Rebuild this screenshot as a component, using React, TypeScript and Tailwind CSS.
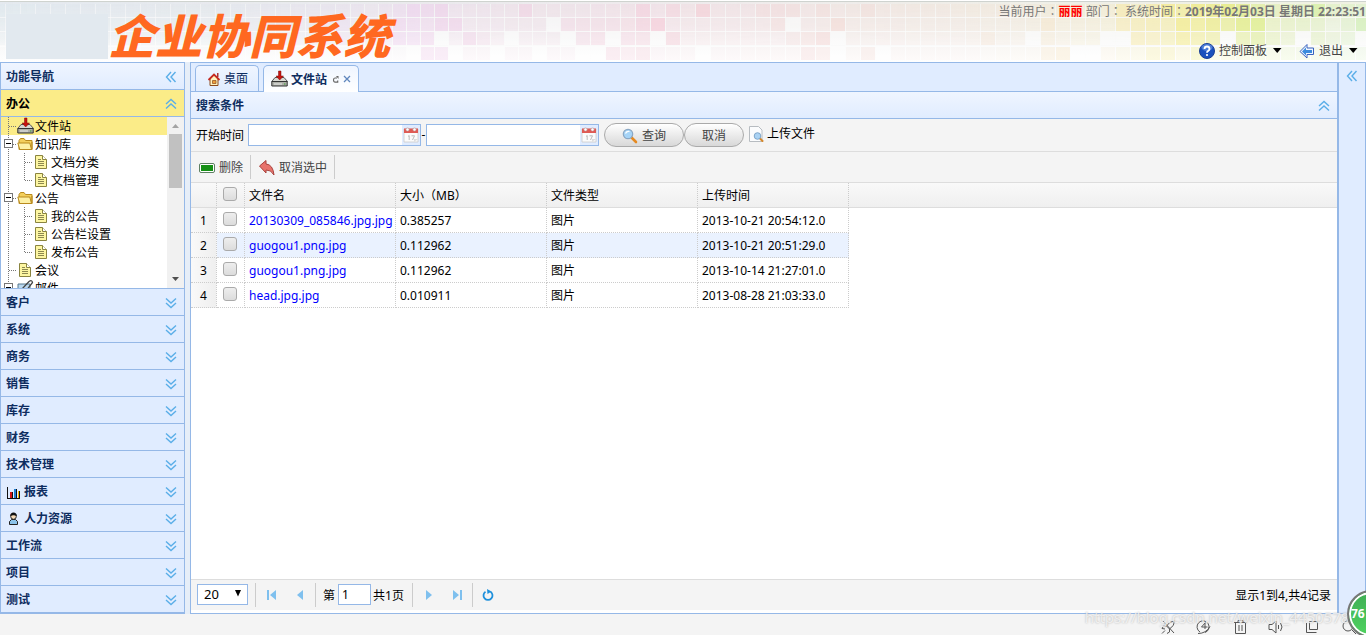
import type { ReactNode } from 'react';

const menus: { label: string; icon?: ReactNode }[] = [
  { label: '客户' },
  { label: '系统' },
  { label: '商务' },
  { label: '销售' },
  { label: '库存' },
  { label: '财务' },
  { label: '技术管理' },
  { label: '报表', icon: <ChartIcon /> },
  { label: '人力资源', icon: <UserIcon /> },
  { label: '工作流' },
  { label: '项目' },
  { label: '测试' },
];

type Guide = 'line' | 'tee' | 'end' | 'open';

const tree: { label: string; guides: Guide[]; icon: 'drive' | 'folder' | 'file' | 'mail'; active?: boolean }[] = [
  { label: '文件站', guides: ['tee'], icon: 'drive', active: true },
  { label: '知识库', guides: ['open'], icon: 'folder' },
  { label: '文档分类', guides: ['line', 'tee'], icon: 'file' },
  { label: '文档管理', guides: ['line', 'end'], icon: 'file' },
  { label: '公告', guides: ['open'], icon: 'folder' },
  { label: '我的公告', guides: ['line', 'tee'], icon: 'file' },
  { label: '公告栏设置', guides: ['line', 'tee'], icon: 'file' },
  { label: '发布公告', guides: ['line', 'end'], icon: 'file' },
  { label: '会议', guides: ['tee'], icon: 'file' },
  { label: '邮件', guides: ['open'], icon: 'mail' },
];

const files = [
  { name: '20130309_085846.jpg.jpg', size: '0.385257', type: '图片', time: '2013-10-21 20:54:12.0' },
  { name: 'guogou1.png.jpg', size: '0.112962', type: '图片', time: '2013-10-21 20:51:29.0' },
  { name: 'guogou1.png.jpg', size: '0.112962', type: '图片', time: '2013-10-14 21:27:01.0' },
  { name: 'head.jpg.jpg', size: '0.010911', type: '图片', time: '2013-08-28 21:03:33.0' },
];

// banner mosaic: colour stops along x, then tiles that differ from the default strength
const hues: [number, number[]][] = [
  [0, [214, 230, 236]],
  [200, [218, 226, 234]],
  [300, [226, 214, 236]],
  [400, [240, 196, 238]],
  [480, [240, 200, 224]],
  [650, [246, 196, 212]],
  [820, [244, 206, 202]],
  [1000, [246, 220, 196]],
  [1100, [250, 228, 160]],
  [1180, [244, 232, 96]],
  [1250, [216, 236, 110]],
  [1366, [196, 238, 170]],
];

const special: Record<string, number> = {
  '322-0': 6, '335-1': 5, '335-2': 5, '392-1': 6, '392-2': 7, '364-0': 2, '392-0': 4,
  '406-0': 6, '420-0': 6, '434-0': 7, '518-0': 7, '635-0': 7, '665-0': 6, '695-0': 8, '755-0': 5, '770-0': 5, '785-0': 5, '815-0': 5, '860-0': 5,
  '406-1': 5, '420-1': 5, '434-1': 7, '448-1': 7, '546-1': 0, '560-1': 5, '575-1': 5, '590-1': 5, '605-1': 5, '620-1': 5, '635-1': 7, '650-1': 9, '770-1': 5, '785-1': 0, '830-1': 7,
  '406-2': 6, '420-2': 7, '434-2': 0, '462-2': 8, '476-2': 5, '504-2': 0, '560-2': 0, '575-2': 6, '590-2': 6, '605-2': 0, '620-2': 6, '635-2': 6, '650-2': 0, '665-2': 8, '785-2': 5, '800-2': 6, '815-2': 8, '830-2': 0,
  '406-3': 0, '420-3': 9, '434-3': 9, '448-3': 0, '490-3': 0, '532-3': 0, '575-3': 0, '590-3': 0, '605-3': 9, '620-3': 7, '635-3': 9, '695-3': 0, '800-3': 9, '815-3': 7, '830-3': 0, '860-3': 8, '875-3': 0,
  '980-2': 6, '1025-2': 0, '1040-1': 6, '1040-2': 5, '1040-3': 8, '1055-3': 9, '1070-3': 0, '1085-3': 0, '1100-2': 0, '1115-2': 0, '1130-2': 7, '1145-2': 6,
  '1115-1': 6, '1130-1': 6, '1145-1': 6, '1160-1': 5, '1175-1': 8, '1190-1': 7, '1205-1': 8, '1220-1': 7, '1235-1': 9, '1250-1': 9,
  '1115-0': 7, '1130-0': 4, '1145-0': 6, '1160-0': 8, '1175-0': 6, '1190-0': 8, '1205-0': 8, '1220-0': 9, '1235-0': 8, '1250-0': 6, '1310-0': 8,
  '1160-2': 6, '1175-2': 8, '1190-2': 7, '1205-2': 7, '1220-2': 0, '1235-2': 7, '1250-2': 8, '1265-2': 5, '1295-2': 0, '1310-2': 5, '1355-2': 0,
  '1145-3': 7, '1160-3': 7, '1190-3': 8, '1355-1': 8, '1325-1': 2,
};

function tileColor(x: number) {
  let i = 0;
  while (i < hues.length - 2 && hues[i + 1][0] < x) i++;
  const [x0, a] = hues[i];
  const [x1, b] = hues[i + 1];
  const t = Math.min(1, Math.max(0, (x - x0) / (x1 - x0)));
  return `rgb(${a.map((v, k) => Math.round(v + (b[k] - v) * t)).join(',')})`;
}

function Mosaic() {
  const columns: number[] = [];
  for (let x = -10; x < 2600; x += x >= 350 && x < 560 ? 14 : 15) columns.push(x);
  const fade = [0.65, 0.6, 0.45, 0.28];
  const tops = [3, 17, 31, 46];
  return (
    <svg className="absolute inset-0 h-full w-full" aria-hidden="true">
      {columns.map((x, i) =>
        tops.map((y, row) => {
          const width = (columns[i + 1] ?? x + 15) - x - 1;
          const strength = special[`${x}-${row}`] ?? (x < 400 && row === 3 ? 1 : x > 1100 ? 4 : 3);
          return strength === 0 ? (
            <rect key={y} x={x + 1} y={y} width={width} height="13" fill="#fff" opacity="0.4" />
          ) : (
            <rect key={y} x={x + 1} y={y} width={width} height="13" fill={tileColor(x)} opacity={(strength / 9) * fade[row]} />
          );
        }),
      )}
      {columns.map((x) => (
        <path key={x} d={`M${x + 0.5} 3V60`} stroke="#fff" opacity="0.35" />
      ))}
      <path d="M0 16.5H2600M0 30.5H2600M0 45.5H2600" stroke="#fff" opacity="0.45" />
    </svg>
  );
}

function Chevrons({ dir }: { dir: 'up' | 'down' | 'left' }) {
  const turn = dir === 'up' ? 'rotate(180 8 8)' : dir === 'left' ? 'rotate(90 8 8)' : undefined;
  return (
    <svg width="16" height="16" viewBox="0 0 16 16" fill="none" stroke="#5aaee8" strokeWidth="1.4" aria-hidden="true">
      <path transform={turn} d="M3 3.5 8 8l5-4.5M3 8l5 4.5L13 8" />
    </svg>
  );
}

function DriveIcon() {
  return (
    <svg width="18" height="18" viewBox="0 0 18 18" aria-hidden="true">
      <path d="M4 7.5h9l3.500 4H.8z" fill="#d8d8d2" stroke="#555" />
      <path d="M.8 11.500h15.400v4.500H.8z" fill="#aeb0a9" stroke="#333" />
      <path d="M3 14h8" stroke="#e9e9e9" />
      <path d="M13 14h1.500" stroke="#3b9c34" />
      <path d="M7.500 1h2.500v5h2.500L8.700 10 5 6h2.500z" fill="#c8130f" stroke="#7a0d0a" strokeWidth=".5" />
    </svg>
  );
}

function FolderIcon() {
  return (
    <svg width="18" height="18" viewBox="0 0 18 18" aria-hidden="true">
      <path d="M2 14.500V5.500L3.500 3.500H7L8.500 5.500H15v9z" fill="#f3cf5c" stroke="#b98a1e" />
      <path d="M.8 8h12l1.700 6.500H2.800z" fill="#fdf0a4" stroke="#b98a1e" />
      <path d="M15 7v7.500" stroke="#b98a1e" />
    </svg>
  );
}

function FileIcon() {
  return (
    <svg width="18" height="18" viewBox="0 0 18 18" aria-hidden="true">
      <path d="M2.500 2.500h7l4 4v9h-11z" fill="#fdf6a2" stroke="#8a8440" />
      <path d="M9.500 2.500v4h4" fill="#fff" stroke="#8a8440" />
      <path d="M5 6.500h3M5 8.500h6M5 10.500h6M5 12.500h6" stroke="#8c8850" />
    </svg>
  );
}

function MailIcon() {
  return (
    <svg width="18" height="18" viewBox="0 0 18 18" aria-hidden="true">
      <path d="M1 5h12v11H1z" fill="#b9d7ee" stroke="#56788f" />
      <path d="M5 10 12 2.500q3-2 3.500 1L9 12" fill="none" stroke="#444" strokeWidth="1.300" />
    </svg>
  );
}

function ChartIcon() {
  return (
    <svg width="16" height="16" viewBox="0 0 16 16" shapeRendering="crispEdges" aria-hidden="true">
      <path d="M4 8h2v6H4z" fill="#d21414" />
      <path d="M8 5h2v9H8z" fill="#1d7fd6" />
      <path d="M12 7h2v7h-2z" fill="#f5b800" />
      <path d="M1.500 3v11.500H14M6.500 8v6M10.500 5v9M13.500 7v8" stroke="#111" fill="none" />
    </svg>
  );
}

function UserIcon() {
  return (
    <svg width="16" height="16" viewBox="0 0 16 16" aria-hidden="true">
      <path d="M3.500 13.500v-3l2-2h4l2 2v3z" fill="#8cc3ea" stroke="#222" />
      <circle cx="7.500" cy="5.500" r="2.800" fill="#f8dcb8" stroke="#222" />
      <path d="M4 5q.5-3.500 3.500-3.500T11 5q-3.500-1.500-7 0z" fill="#111" />
    </svg>
  );
}

function HouseIcon() {
  return (
    <svg width="16" height="16" viewBox="0 0 16 16" aria-hidden="true">
      <path d="M4 8v6.500h8V8L8 4z" fill="#fff3bf" stroke="#8b4a1c" />
      <path d="M6.500 9.500h3.500v3H6.500z" fill="#f0a03c" stroke="#8b4a1c" strokeWidth=".7" />
      <path d="M11 2h1.500v4H11z" fill="#a33" />
      <path d="M2.500 9 8 3.500 13.500 9" fill="none" stroke="#c52a20" strokeWidth="1.800" />
    </svg>
  );
}

function CalendarIcon() {
  return (
    <svg width="16" height="18" viewBox="0 0 16 18" aria-hidden="true">
      <path d="M1 3h14v13H1z" fill="#fbfbfb" stroke="#ccc" strokeWidth=".8" />
      <path d="M1 2.500h14V7H1z" fill="#df5a54" />
      <circle cx="4.500" cy="3.500" r="1.600" fill="#fff" stroke="#b99" strokeWidth=".6" />
      <circle cx="11.500" cy="3.500" r="1.600" fill="#fff" stroke="#b99" strokeWidth=".6" />
      <path d="M5 10.500 6.200 9.500V14M8.500 9.800h3L9.500 14" fill="none" stroke="#bbb" />
      <path d="M11 16v-3h4z" fill="#ddd" />
    </svg>
  );
}

function GlassIcon() {
  return (
    <svg width="16" height="16" viewBox="0 0 16 16" aria-hidden="true">
      <path d="m9.500 9.500 4.500 4.500" stroke="#e58a22" strokeWidth="2.600" strokeLinecap="round" />
      <circle cx="6" cy="6" r="4.700" fill="#a6d4f7" stroke="#8aa7c4" strokeWidth="1.200" />
      <path d="M3.500 5.500q1-2.500 4-2" fill="none" stroke="#fff" strokeWidth="1.200" />
    </svg>
  );
}

function PreviewIcon() {
  return (
    <svg width="16" height="16" viewBox="0 0 16 16" aria-hidden="true">
      <path d="M1.500.5h9L14 4v11.500H1.500z" fill="#fbfcfd" stroke="#b7bcc1" />
      <path d="M12 12.500 14.500 15" stroke="#d5882c" strokeWidth="2" strokeLinecap="round" />
      <circle cx="9.500" cy="10" r="3.300" fill="#a9d2f3" stroke="#7fa6c9" />
    </svg>
  );
}

function GuideCell({ kind }: { kind: Guide }) {
  return (
    <svg width="16" height="18" viewBox="0 0 16 18" className="shrink-0" shapeRendering="crispEdges" aria-hidden="true">
      <path d={kind === 'end' ? 'M7.500 0V9' : 'M7.500 0V18'} stroke="#777" strokeDasharray="1 1" />
      {kind !== 'line' && <path d="M8 9.500H16" stroke="#777" strokeDasharray="1 1" />}
      {kind === 'open' && (
        <>
          <path d="M3.500 4.500h8v8h-8z" fill="#fff" stroke="#777" />
          <path d="M5 8.500h5" stroke="#000" />
        </>
      )}
    </svg>
  );
}

const treeIcons = { drive: <DriveIcon />, folder: <FolderIcon />, file: <FileIcon />, mail: <MailIcon /> };

// the TC face centres the full-width colon
function Colon() {
  return <span className="font-['Noto_Sans_CJK_TC',sans-serif]">：</span>;
}

function Banner() {
  return (
    <header className="relative flex h-[62px] shrink-0 justify-between overflow-hidden border-t border-white bg-gradient-to-b from-[#ebecec] to-white">
      <div className="absolute inset-x-0 top-0 h-11 bg-gradient-to-r from-[#dce6f2]/50 via-[#f6e6ec]/30 to-[#f4f8d8]/50 [mask-image:linear-gradient(#000,transparent)]"></div>
      <Mosaic />
      <div className="relative flex flex-1 border-t border-[#cfd3cf]">
        <div className="ml-1.5 mt-3 h-[45px] w-[102px] bg-[#e2e9ef]"></div>
        <h1 className="mt-[9px] whitespace-nowrap text-[47px] font-black italic leading-[50px] text-[#ff6820]">企业协同系统</h1>
      </div>
      <div className="relative flex flex-col items-end border-t border-[#cfd3cf]">
        <p className="whitespace-pre text-[12px] leading-[18px] text-[#777]">
          当前用户<Colon /><b className="text-[#f00]">丽丽</b> 部门<Colon /> 系统时间<Colon /><b>2019年02月03日 星期日 22:23:51</b>
        </p>
        <div className="mt-5 flex gap-4 pr-[7px] text-[12px] leading-[20px] text-[#444]">
          <button type="button" className="flex items-center gap-1">
            <svg width="16" height="16" viewBox="0 0 16 16" aria-hidden="true">
              <circle cx="8" cy="8" r="7.500" fill="#1b50bd" stroke="#1b3f94" />
              <ellipse cx="8" cy="4.500" rx="5.500" ry="3.500" fill="#6f9cea" opacity=".6" />
              <path d="M5.500 6q0-2.500 2.500-2.500T10.500 6q0 1.200-1.300 1.900Q8 8.500 8 9.800" fill="none" stroke="#fff" strokeWidth="1.800" />
              <circle cx="8" cy="12" r="1.100" fill="#fff" />
            </svg>
            控制面板
            <Caret />
          </button>
          <button type="button" className="flex items-center gap-1">
            <svg width="16" height="16" viewBox="0 0 16 16" aria-hidden="true">
              <path d="M8 1.500V5h6.500v6.500H8V15L1 8.500z" fill="#eef5ff" stroke="#3a62c0" />
              <path d="M7 4.500V7h6v3H7v2.500L3 8.500z" fill="#3b8bdd" />
            </svg>
            退出
            <Caret />
          </button>
        </div>
      </div>
    </header>
  );
}

function Caret() {
  return (
    <svg width="12" height="6" viewBox="0 0 12 6" aria-hidden="true">
      <path d="M2 0h8.500L6.200 5z" fill="#000" />
    </svg>
  );
}

function Sidebar() {
  return (
    <aside className="flex w-[185px] shrink-0 flex-col border border-b-2 border-[#95b8e7] bg-[#e0ecff] text-[12px] text-[#0e2d5f]">
      <div className="flex h-[27px] shrink-0 items-center justify-between border-b border-[#95b8e7] bg-gradient-to-b from-[#eff5ff] to-[#e0ecff] px-[5px] pt-0.5 font-bold">
        功能导航
        <Chevrons dir="left" />
      </div>
      <button type="button" className="flex h-[27px] shrink-0 items-center justify-between border-b border-[#95b8e7] bg-[#fbec88] px-[5px] pt-px font-bold text-black">
        办公
        <Chevrons dir="up" />
      </button>
      <div className="flex min-h-0 flex-1 overflow-hidden bg-white text-black">
        <ul className="flex-1">
          {tree.map((node) => (
            <li key={node.label} className={node.active ? 'flex h-[18px] items-center bg-[#fbec88]' : 'flex h-[18px] items-center'}>
              {node.guides.map((kind, i) => (
                <GuideCell key={i} kind={kind} />
              ))}
              {treeIcons[node.icon]}
              <a href="#" className="whitespace-nowrap pt-0.5 leading-[18px]">{node.label}</a>
            </li>
          ))}
        </ul>
        <div className="flex w-[17px] flex-col items-center bg-[#f1f1f1]">
          <svg width="17" height="17" viewBox="0 0 17 17" aria-hidden="true">
            <path d="M5 11h7L8.500 7z" fill="#a3a3a3" />
          </svg>
          <div className="h-[54px] w-[13px] bg-[#c1c1c1]"></div>
          <svg className="mt-auto" width="17" height="17" viewBox="0 0 17 17" aria-hidden="true">
            <path d="M5 6h7l-3.500 4z" fill="#505050" />
          </svg>
        </div>
      </div>
      {menus.map((menu) => (
        <button key={menu.label} type="button" className="flex h-[27px] shrink-0 items-center gap-0.5 border-t border-[#95b8e7] px-[5px] pt-0.5 font-bold">
          {menu.icon}
          <span className="flex-1 text-left">{menu.label}</span>
          <Chevrons dir="down" />
        </button>
      ))}
    </aside>
  );
}

function DateBox({ label }: { label: string }) {
  return (
    <div className="flex h-[22px] w-[173px] border border-[#95b8e7] bg-white">
      <input type="text" aria-label={label} className="min-w-0 flex-1 px-1 outline-none" />
      <button type="button" aria-label="选择日期" className="flex w-[18px] items-center justify-center bg-[#e0ecff]">
        <CalendarIcon />
      </button>
    </div>
  );
}

const pill = 'flex h-6 items-center justify-center gap-1 rounded-full border border-[#aaa] bg-gradient-to-b from-white to-[#d8d8d8] pt-px text-[#444]';
const checkbox = 'block h-[14px] w-[14px] appearance-none rounded-[3px] border border-[#aaa] bg-gradient-to-b from-[#eee] to-[#dcdcdc]';

function FileTable() {
  const cell = 'border-b border-r border-dotted border-[#ccc] pl-1 pt-0.5';
  const tick = 'border-b border-r border-dotted border-[#ccc] pl-1.5 pt-1 align-top';
  const head = 'border-b border-r border-[#ddd] [border-right-style:dotted] [border-right-color:#ccc] pl-1 pt-0.5 text-left font-normal';
  return (
    <table className="w-full table-fixed border-separate border-spacing-0 text-[12px] leading-[22px] text-black">
      <colgroup>
        <col className="w-[26px]" />
        <col className="w-[28px]" />
        <col className="w-[151px]" />
        <col className="w-[151px]" />
        <col className="w-[151px]" />
        <col className="w-[151px]" />
        <col />
      </colgroup>
      <thead>
        <tr className="h-[25px] bg-gradient-to-b from-[#f9f9f9] to-[#efefef]">
          <td className={head}></td>
          <th className="border-b border-r border-[#ddd] pl-1.5 pt-1 align-top [border-right-color:#ccc] [border-right-style:dotted]">
            <input type="checkbox" aria-label="全选" className={checkbox} />
          </th>
          <th className={head}>文件名</th>
          <th className={head}>大小（MB）</th>
          <th className={head}>文件类型</th>
          <th className={head}>上传时间</th>
          <td className="border-b border-[#ddd]"></td>
        </tr>
      </thead>
      <tbody>
        {files.map((file, i) => (
          <tr key={i} className="h-[25px]">
            <td className="border-b border-r border-dotted border-[#ccc] bg-gradient-to-r from-[#f9f9f9] to-[#efefef] pt-0.5 text-center">{i + 1}</td>
            <td className={i === 1 ? tick + ' bg-[#eaf2ff]' : tick}>
              <input type="checkbox" aria-label={'选择 ' + file.name} className={checkbox} />
            </td>
            <td className={i === 1 ? cell + ' bg-[#eaf2ff]' : cell}>
              <a href="#" className="whitespace-nowrap text-[#00f]">{file.name}</a>
            </td>
            <td className={i === 1 ? cell + ' bg-[#eaf2ff]' : cell}>{file.size}</td>
            <td className={i === 1 ? cell + ' bg-[#eaf2ff]' : cell}>{file.type}</td>
            <td className={i === 1 ? cell + ' bg-[#eaf2ff]' : cell}>{file.time}</td>
            <td></td>
          </tr>
        ))}
      </tbody>
    </table>
  );
}

function Pager() {
  const step = 'flex h-6 w-7 items-center justify-center';
  const bar = 'h-6 w-px shrink-0 bg-[#ccc]';
  return (
    <div className="mb-[3px] flex h-[31px] shrink-0 items-center border-t border-[#ddd] bg-[#f4f4f4] px-1.5 text-[12px] text-black">
      <div className="relative mb-0.5">
        <select aria-label="每页条数" className="block h-[21px] w-[51px] appearance-none border border-[#95b8e7] bg-white pl-1.5 text-[13px] leading-[18px]">
          <option>20</option>
        </select>
        <svg className="pointer-events-none absolute right-1.5 top-1.5" width="8" height="7" viewBox="0 0 8 7" aria-hidden="true">
          <path d="M1 0h6L4 6.500z" fill="#000" />
        </svg>
      </div>
      <span className={bar + ' ml-[7px] mr-0.5'}></span>
      <button type="button" aria-label="首页" className={step}>
        <svg width="10" height="10" viewBox="0 0 10 10" fill="#7fc0ee"><path d="M0 0h2v10H0zM9 0v10L3 5z" /></svg>
      </button>
      <button type="button" aria-label="上一页" className={step}>
        <svg width="8" height="10" viewBox="0 0 8 10" fill="#7fc0ee"><path d="M7 0v10L1 5z" /></svg>
      </button>
      <span className={bar + ' ml-px mr-[7px]'}></span>
      <label htmlFor="page" className="mr-[3px] pt-0.5">第</label>
      <input id="page" type="text" defaultValue="1" className="mb-0.5 h-[21px] w-[33px] border border-[#95b8e7] bg-white px-[3px] outline-none" />
      <span className="ml-0.5 mr-2 pt-0.5">共1页</span>
      <span className={bar + ' mr-0.5'}></span>
      <button type="button" aria-label="下一页" className={step}>
        <svg width="8" height="10" viewBox="0 0 8 10" fill="#7fc0ee"><path d="M1 0v10l6-5z" /></svg>
      </button>
      <button type="button" aria-label="末页" className={step}>
        <svg width="10" height="10" viewBox="0 0 10 10" fill="#7fc0ee"><path d="M8 0h2v10H8zM1 0v10l6-5z" /></svg>
      </button>
      <span className={bar + ' ml-px mr-px'}></span>
      <button type="button" aria-label="刷新" className={step}>
        <svg width="12" height="12" viewBox="0 0 12 12" fill="none" aria-hidden="true">
          <path d="M3.500 2.700A4.500 4.500 0 1 0 8.500 2.700" stroke="#1e90dc" strokeWidth="1.800" />
          <path d="M5 0l4.500 2.500L5.500 5z" fill="#1e90dc" />
        </svg>
      </button>
      <span className="ml-auto pt-0.5">显示1到4,共4记录</span>
    </div>
  );
}

function Workspace() {
  return (
    <main className="ml-[5px] flex min-w-0 flex-1 flex-col border border-[#95b8e7] bg-white text-[12px] text-[#0e2d5f]">
      <nav className="flex h-[29px] shrink-0 items-end gap-1 border-b border-[#95b8e7] bg-[#e0ecff] pl-1">
        <button type="button" className="flex h-[26px] w-[64px] items-center justify-center gap-0.5 rounded-t-[5px] border border-b-0 border-[#95b8e7] bg-gradient-to-b from-[#eff5ff] to-[#e0ecff]">
          <HouseIcon />
          桌面
        </button>
        <button type="button" className="-mb-px flex h-[27px] w-[96px] items-center justify-center rounded-t-[5px] border border-b-0 border-[#95b8e7] bg-gradient-to-b from-[#eff5ff] to-white font-bold">
          <DriveIcon />
          <span className="ml-0.5 pt-px">文件站</span>
          <svg className="ml-1" width="20" height="10" viewBox="0 0 20 10" fill="none" aria-hidden="true">
            <path d="M6 4H4Q2.500 4 2.500 6T4 8.200h2.700V6.500" stroke="#666" strokeWidth="1.200" />
            <path d="M5 2h2.500v3z" fill="#666" />
            <path d="m13 2 6 6M19 2l-6 6" stroke="#5f86bd" strokeWidth="1.300" />
          </svg>
        </button>
      </nav>
      <div className="flex h-[27px] shrink-0 items-center justify-between border-b border-[#95b8e7] bg-gradient-to-b from-[#eff5ff] to-[#e0ecff] px-[5px] pt-px font-bold">
        搜索条件
        <Chevrons dir="up" />
      </div>
      <form className="flex h-[33px] shrink-0 items-center border-b border-[#ddd] bg-[#f4f4f4] pl-[5px] text-black">
        <span className="mr-1 pt-0.5">开始时间</span>
        <DateBox label="开始时间" />
        <span className="w-[5px] text-center">-</span>
        <DateBox label="结束时间" />
        <button type="button" className={pill + ' ml-[5px] w-20'}>
          <GlassIcon />
          查询
        </button>
        <button type="button" className={pill + ' w-[60px]'}>取消</button>
        <a href="#" className="mb-0.5 ml-1 flex items-center gap-[3px]">
          <PreviewIcon />
          上传文件
        </a>
      </form>
      <div className="flex h-[31px] shrink-0 items-center border-b border-[#ddd] bg-[#f4f4f4] pl-2 text-[#444]">
        <button type="button" className="flex items-center gap-1 pt-0.5">
          <svg width="16" height="16" viewBox="0 0 16 16" aria-hidden="true">
            <rect x=".5" y="3.500" width="15" height="9" rx="1.500" fill="#fff" stroke="#5d7f62" />
            <path d="M2 5h12v6H2z" fill="#159015" />
          </svg>
          删除
        </button>
        <span className="ml-[7px] mr-2 h-6 w-px bg-[#ccc]"></span>
        <button type="button" className="flex items-center gap-1 pt-0.5">
          <svg width="16" height="16" viewBox="0 0 16 16" aria-hidden="true">
            <path d="M.5 6 7 .5V4q7 .5 8 11-3-5.500-8-5v3z" fill="#e8736c" stroke="#a8403b" />
          </svg>
          取消选中
        </button>
        <span className="ml-[7px] h-6 w-px bg-[#ccc]"></span>
      </div>
      <div className="min-h-0 flex-1 overflow-hidden">
        <FileTable />
      </div>
      <Pager />
    </main>
  );
}

function StatusBar() {
  return (
    <footer className="relative flex h-[21px] shrink-0 items-end justify-end gap-5 bg-[#f4f4f4] pr-[10px]">
      <span className="pointer-events-none absolute -top-2 right-2 whitespace-nowrap text-[15px] leading-[22px] text-white/70 [text-shadow:0_0_2px_#aaa]">
        https://blog.csdn.net/weixin_44505789
      </span>
      <svg width="16" height="16" viewBox="0 0 16 16" fill="none" stroke="#555" aria-hidden="true">
        <path d="M14.500 2q-5 0-8 5l3 3q5-3 5-8zM6.500 7h-3l-1.500 2.500 3 .5M9.500 10v3L7 14.500M2 14.500l3-3M3 2l11 12" />
      </svg>
      <svg width="16" height="16" viewBox="0 0 16 16" fill="none" stroke="#555" aria-hidden="true">
        <path d="M4 13A6 6 0 1 1 9 13.500M2 14.500q8 0 12-7M9.500 3.500l-4 4.500h6M9 4v6" />
      </svg>
      <svg width="16" height="16" viewBox="0 0 16 16" fill="none" stroke="#555" aria-hidden="true">
        <path d="M2 3.500h13M6 3.500v-2h5v2M3.500 3.500v11h10v-11M7 6v6M10 6v6" />
      </svg>
      <svg width="16" height="16" viewBox="0 0 16 16" fill="none" stroke="#555" aria-hidden="true">
        <path d="M1 5.500h3l4-3.500v12l-4-3.500H1zM10.500 6v4M12.500 4q3 4 0 8" />
      </svg>
      <svg width="16" height="16" viewBox="0 0 16 16" fill="none" stroke="#555" aria-hidden="true">
        <path d="M5.500 2.500h8v8h-8zM2.500 4v9.500h10" />
      </svg>
      <svg width="16" height="16" viewBox="0 0 16 16" fill="none" stroke="#555" aria-hidden="true">
        <circle cx="8" cy="7" r="5" />
        <path d="m12 11 4 4" />
      </svg>
      <div className="absolute -right-[29px] -top-6 h-12 w-12 rounded-full border-2 border-[#777] bg-gradient-to-b from-[#3fae55] to-[#4fd35f] ring-2 ring-inset ring-white">
        <span className="absolute left-0.5 top-3.5 text-[12px] font-bold leading-[16px] text-white">76</span>
      </div>
    </footer>
  );
}

export default function App() {
  return (
    <div className="flex h-screen min-h-[560px] flex-col overflow-hidden bg-[#f4f4f4] font-['Noto_Sans','Noto_Sans_CJK_SC',sans-serif]">
      <Banner />
      <div className="flex min-h-0 flex-1 bg-[#e6eef8]">
        <Sidebar />
        <Workspace />
        <aside className="flex w-7 shrink-0 justify-center border border-[#95b8e7] bg-[#e0ecff] pt-[5px]">
          <button type="button" aria-label="展开" className="h-4">
            <Chevrons dir="left" />
          </button>
        </aside>
      </div>
      <StatusBar />
    </div>
  );
}
